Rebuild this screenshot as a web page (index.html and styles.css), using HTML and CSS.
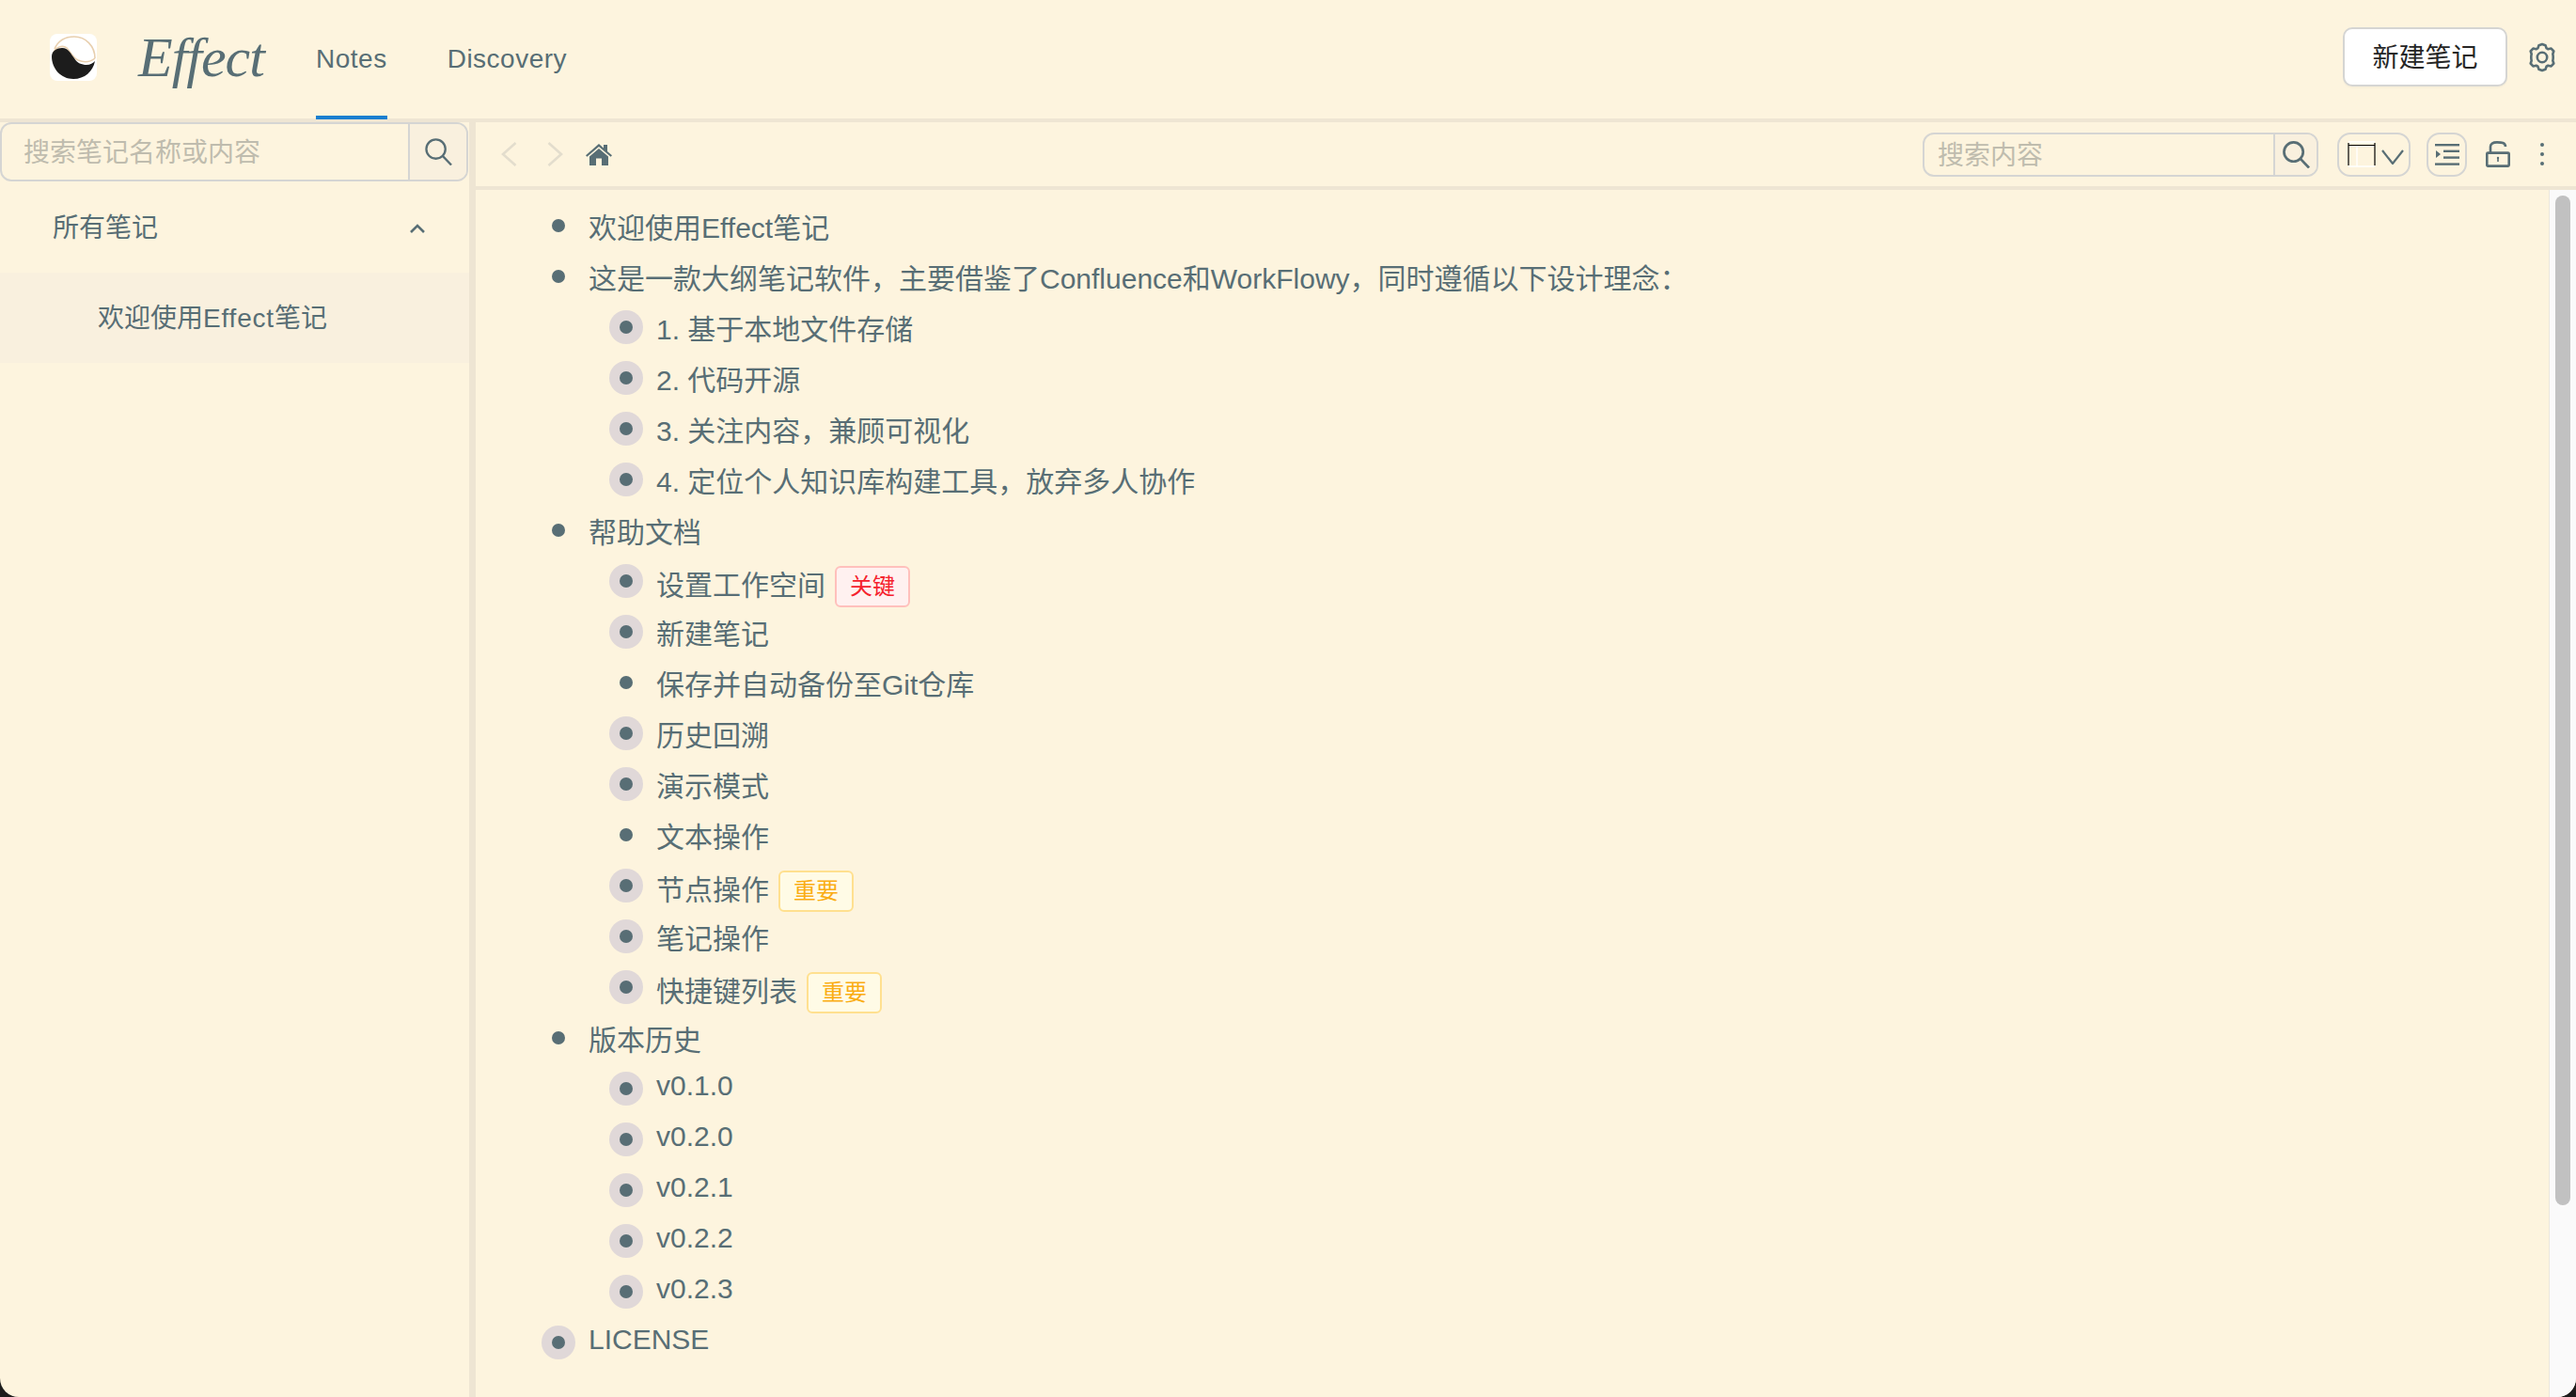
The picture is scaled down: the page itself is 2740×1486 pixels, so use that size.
FILE: index.html
```html
<!DOCTYPE html>
<html lang="zh">
<head>
  <meta charset="UTF-8">
  <title>Effect</title>
  <link rel="stylesheet" href="styles.css">
</head>
<body>

<div class="app">
  <header class="topbar">
    <svg class="logo" viewBox="0 0 50 50">
      <rect width="50" height="50" rx="8" fill="#fff"/>
      <path d="M5 16C9 7 17 3 26 3C38 3 48 13 48 26" fill="none" stroke="#e8cfae" stroke-width="1.6"/>
      <path d="M4 20C7 13 14 12 18 15C22 19 24 25 30 28C37 31 43 30 48 26" fill="none" stroke="#e8cfae" stroke-width="1.6"/>
      <path d="M2 24C2 18 8 15 13 15C20 15 22 21 26 26C29 31 34 33 39 33C43 33 46 31 48 29C46 40 37 48 25 48C12 48 2 37 2 24Z" fill="#1c1c1c"/>
    </svg>
    <div class="brand">Effect</div>
    <nav class="tabs">
      <a class="tab active">Notes</a>
      <a class="tab">Discovery</a>
    </nav>
    <button class="new-note">新建笔记</button>
    <svg class="gear" viewBox="0 0 32 32" fill="none" stroke="#586e75" stroke-width="2.6" stroke-linejoin="round">
      <path d="M16 2L19.5 3.2L20.5 6.2C21.2 6.5 21.8 6.9 22.4 7.3L25.6 6.6L28.3 9.5L27.3 12.5C27.5 13.3 27.7 14.1 27.7 16C27.7 17.9 27.5 18.7 27.3 19.5L28.3 22.5L25.6 25.4L22.4 24.7C21.8 25.1 21.2 25.5 20.5 25.8L19.5 28.8L16 30L12.5 28.8L11.5 25.8C10.8 25.5 10.2 25.1 9.6 24.7L6.4 25.4L3.7 22.5L4.7 19.5C4.5 18.7 4.3 17.9 4.3 16C4.3 14.1 4.5 13.3 4.7 12.5L3.7 9.5L6.4 6.6L9.6 7.3C10.2 6.9 10.8 6.5 11.5 6.2L12.5 3.2Z"/>
      <circle cx="16" cy="16" r="5.2"/>
    </svg>
  </header>

  <div class="workspace">
    <aside class="sidebar">
      <div class="search search-side">
        <div class="search-input">搜索笔记名称或内容</div>
        <div class="search-btn">
          <svg class="search-icon" viewBox="0 0 30 30" fill="none" stroke="#586e75" stroke-width="2.4">
            <circle cx="12" cy="12" r="10.5"/>
            <path d="M19.5 19.5L29 29.5"/>
          </svg>
        </div>
      </div>
      <div class="tree-head">
        <span>所有笔记</span>
        <svg class="caret" viewBox="0 0 18 12" fill="none" stroke="#586e75" stroke-width="2.6">
          <path d="M2 10L9 3L16 10"/>
        </svg>
      </div>
      <div class="tree-item"><span>欢迎使用<span class="latin">Effect</span>笔记</span></div>
    </aside>

    <main class="main">
      <div class="toolbar">
        <svg class="chev" viewBox="0 0 17 26" fill="none" stroke="#e3ddcd" stroke-width="2.6"><path d="M15.5 1L2 13L15.5 25"/></svg>
        <svg class="chev chev-next" viewBox="0 0 17 26" fill="none" stroke="#e3ddcd" stroke-width="2.6"><path d="M1.5 1L15 13L1.5 25"/></svg>
        <svg class="home" viewBox="0 0 28 23" fill="#586e75">
          <path d="M14 0L19 4.4V1H23V7.9L28 12.2L26.6 13.8L14 2.9L1.4 13.8L0 12.2Z"/>
          <path d="M14 5L24 13.6V23H17V15.5H11V23H4V13.6Z"/>
        </svg>
        <div class="toolbar-space"></div>
        <div class="search search-note">
          <div class="search-input">搜索内容</div>
          <div class="search-btn">
            <svg class="search-icon" viewBox="0 0 30 30" fill="none" stroke="#586e75" stroke-width="2.8">
              <circle cx="12" cy="12" r="10.5"/>
              <path d="M19.5 19.5L29 29.5"/>
            </svg>
          </div>
        </div>
        <div class="tool-btn tool-layout">
          <svg class="layout-icon" viewBox="0 0 30 28" fill="none">
            <path d="M1 1H29M1 27H29M10 5V27" stroke="#fff" stroke-width="1.4"/>
            <path d="M1 2V26M29 2V26M1 4.5H29" stroke="#000" stroke-width="1.2"/>
          </svg>
          <svg class="layout-chev" viewBox="0 0 24 16" fill="none" stroke="#586e75" stroke-width="2.2"><path d="M1 1L12 15L23 1"/></svg>
        </div>
        <div class="tool-btn tool-indent">
          <svg class="indent-icon" viewBox="0 0 26 23" fill="#586e75">
            <rect width="26" height="2.4"/>
            <rect x="9" y="6.6" width="17" height="2.4"/>
            <rect x="9" y="13.4" width="17" height="2.4"/>
            <rect y="20.4" width="26" height="2.4"/>
            <path d="M1 7V15L6 11Z"/>
          </svg>
        </div>
        <svg class="lock" viewBox="0 0 26 28" fill="none" stroke="#586e75" stroke-width="2.6">
          <path d="M5 12V6C5 3 7.5 1.4 12 1.4C16.5 1.4 21 1.4 21 6"/>
          <rect x="1.3" y="12.6" width="23.4" height="14" rx="1"/>
          <path d="M13 18V22" stroke-width="1.6"/>
          <circle cx="13" cy="18" r="1.2" fill="#586e75" stroke="none"/>
        </svg>
        <div class="more"><i></i><i></i><i></i></div>
      </div>

      <div class="note-area">
        <div class="note">
          <ul class="outline">
            <li><div class="row"><span class="bullet"></span><span class="txt">欢迎使用Effect笔记</span></div></li>
            <li>
              <div class="row"><span class="bullet"></span><span class="txt">这是一款大纲笔记软件，主要借鉴了Confluence和WorkFlowy，同时遵循以下设计理念：</span></div>
              <ul class="outline">
                <li><div class="row"><span class="bullet fold"></span><span class="txt">1. 基于本地文件存储</span></div></li>
                <li><div class="row"><span class="bullet fold"></span><span class="txt">2. 代码开源</span></div></li>
                <li><div class="row"><span class="bullet fold"></span><span class="txt">3. 关注内容，兼顾可视化</span></div></li>
                <li><div class="row"><span class="bullet fold"></span><span class="txt">4. 定位个人知识库构建工具，放弃多人协作</span></div></li>
              </ul>
            </li>
            <li>
              <div class="row"><span class="bullet"></span><span class="txt">帮助文档</span></div>
              <ul class="outline">
                <li><div class="row"><span class="bullet fold"></span><span class="txt tagged">设置工作空间</span><span class="tag tag-red">关键</span></div></li>
                <li><div class="row"><span class="bullet fold"></span><span class="txt">新建笔记</span></div></li>
                <li><div class="row"><span class="bullet"></span><span class="txt">保存并自动备份至Git仓库</span></div></li>
                <li><div class="row"><span class="bullet fold"></span><span class="txt">历史回溯</span></div></li>
                <li><div class="row"><span class="bullet fold"></span><span class="txt">演示模式</span></div></li>
                <li><div class="row"><span class="bullet"></span><span class="txt">文本操作</span></div></li>
                <li><div class="row"><span class="bullet fold"></span><span class="txt tagged">节点操作</span><span class="tag tag-gold">重要</span></div></li>
                <li><div class="row"><span class="bullet fold"></span><span class="txt">笔记操作</span></div></li>
                <li><div class="row"><span class="bullet fold"></span><span class="txt tagged">快捷键列表</span><span class="tag tag-gold">重要</span></div></li>
              </ul>
            </li>
            <li>
              <div class="row"><span class="bullet"></span><span class="txt">版本历史</span></div>
              <ul class="outline">
                <li><div class="row"><span class="bullet fold"></span><span class="txt ver">v0.1.0</span></div></li>
                <li><div class="row"><span class="bullet fold"></span><span class="txt ver">v0.2.0</span></div></li>
                <li><div class="row"><span class="bullet fold"></span><span class="txt ver">v0.2.1</span></div></li>
                <li><div class="row"><span class="bullet fold"></span><span class="txt ver">v0.2.2</span></div></li>
                <li><div class="row"><span class="bullet fold"></span><span class="txt ver">v0.2.3</span></div></li>
              </ul>
            </li>
            <li><div class="row"><span class="bullet fold"></span><span class="txt ver">LICENSE</span></div></li>
          </ul>
        </div>
        <div class="scrollbar"><div class="thumb"></div></div>
      </div>
    </main>
  </div>
</div>

</body>
</html>
```

FILE: styles.css
```css
* { box-sizing: border-box; }
html, body {
  margin: 0;
  height: 100%;
  background: #1c1c1c;
}
body {
  font-family: "Liberation Sans", "Noto Sans CJK SC", sans-serif;
  font-size: 30px;
  color: #586e75;
  overflow: hidden;
}
.app {
  display: flex;
  flex-direction: column;
  height: 1486px;
  background: #fdf4de;
  border-radius: 0 0 20px 20px;
  overflow: hidden;
}

/* top bar */
.topbar {
  display: flex;
  align-items: center;
  flex: none;
  height: 130px;
  padding: 0 20px 4px 53px;
  border-bottom: 4px solid #eee5d3;
}
.logo {
  width: 50px;
  height: 50px;
  flex: none;
}
.brand {
  width: 233px;
  padding-left: 44px;
  font-family: "Liberation Serif", serif;
  font-style: italic;
  font-size: 60px;
  letter-spacing: -1px;
  flex: none;
}
.tabs {
  display: flex;
  align-self: stretch;
  gap: 64px;
  flex: 1;
}
.tab {
  display: flex;
  align-items: center;
  height: 127px;
  padding-top: 3px;
  font-size: 28px;
  letter-spacing: .5px;
  border-bottom: 4px solid transparent;
}
.tab.active {
  border-bottom-color: #1a7fd0;
}
.new-note {
  width: 175px;
  height: 63px;
  margin-top: -1px;
  padding: 0 0 3px;
  font: inherit;
  font-size: 28px;
  color: #262626;
  background: #fff;
  border: 2px solid #d5d5d3;
  border-radius: 10px;
  box-shadow: 0 2px 0 rgba(0,0,0,0.02);
}
.gear {
  width: 32px;
  height: 32px;
  margin-left: 21px;
}

/* layout */
.workspace {
  display: flex;
  flex: 1;
  min-height: 0;
}
.sidebar {
  width: 506px;
  flex: none;
  border-right: 7px solid #eee5d3;
}
.main {
  display: flex;
  flex-direction: column;
  flex: 1;
  min-width: 0;
}

/* search boxes */
.search {
  display: flex;
  border: 2px solid #d5d5d3;
  border-radius: 12px;
  font-size: 28px;
}
.search-input {
  flex: 1;
  padding-bottom: 3px;
  color: #bfbcae;
  display: flex;
  align-items: center;
}
.search-btn {
  display: flex;
  align-items: center;
  justify-content: center;
  border-left: 2px solid #d5d5d3;
  background: #f9f0de;
  border-radius: 0 10px 10px 0;
}
.search-side {
  width: 498px;
  height: 63px;
}
.search-side .search-input { padding-left: 23px; }
.search-side .search-btn { width: 62px; }
.search-side .search-icon { width: 29px; height: 29px; }
.search-note {
  width: 421px;
  height: 47px;
}
.search-note .search-input { padding-left: 14px; }
.search-note .search-btn { width: 46px; }
.search-note .search-icon { width: 29px; height: 29px; }

/* note tree */
.tree-head {
  display: flex;
  align-items: center;
  justify-content: space-between;
  height: 97px;
  padding: 0 46px 4px 56px;
  font-size: 28px;
}
.caret {
  width: 18px;
  height: 12px;
  margin-top: 6px;
}
.tree-item {
  display: flex;
  align-items: center;
  height: 96px;
  padding: 0 0 4px 104px;
  font-size: 28px;
  background: #f9f0de;
}
.latin {
  letter-spacing: .8px;
}

/* toolbar */
.toolbar {
  display: flex;
  align-items: center;
  flex: none;
  height: 72px;
  padding: 0 34px 0 27px;
  border-bottom: 4px solid #eee5d3;
}
.toolbar-space { flex: 1; }
.chev {
  width: 17px;
  height: 26px;
}
.chev-next { margin-left: 32px; }
.home {
  width: 28px;
  height: 23px;
  margin-left: 24px;
}
.tool-btn {
  display: flex;
  align-items: center;
  height: 47px;
  border: 2px solid #d5d5d3;
  border-radius: 14px;
}
.tool-layout {
  width: 78px;
  margin-left: 20px;
  padding-left: 9px;
}
.layout-icon {
  width: 30px;
  height: 28px;
  flex: none;
}
.layout-chev {
  width: 24px;
  height: 16px;
  margin-left: 6px;
  margin-top: 5px;
  flex: none;
}
.tool-indent {
  justify-content: center;
  width: 43px;
  margin-left: 17px;
}
.indent-icon {
  width: 26px;
  height: 23px;
}
.lock {
  width: 26px;
  height: 28px;
  margin-left: 20px;
}
.more {
  display: flex;
  flex-direction: column;
  gap: 6px;
  margin-left: 32px;
}
.more i {
  display: block;
  width: 4px;
  height: 4px;
  border-radius: 50%;
  background: #586e75;
}

/* outline */
.note-area {
  display: flex;
  flex: 1;
  min-height: 0;
}
.note {
  flex: 1;
  min-width: 0;
  padding: 11px 0 0 70px;
}
.outline {
  list-style: none;
  margin: 0;
  padding: 0;
}
.outline .outline {
  margin-left: 72px;
}
.row {
  display: flex;
  align-items: center;
  height: 54px;
}
.bullet {
  display: flex;
  align-items: center;
  justify-content: center;
  width: 36px;
  height: 36px;
  margin-right: 14px;
  border-radius: 50%;
  flex: none;
}
.bullet::after {
  content: "";
  width: 14px;
  height: 14px;
  border-radius: 50%;
  background: #586e75;
}
.bullet.fold {
  background: #e0d8d8;
}
.txt {
  white-space: nowrap;
}
.txt.ver {
  margin-bottom: 6px;
}
.txt.tagged {
  padding-top: 4px;
}
.tag {
  margin: 12px 0 0 10px;
  padding: 0 14px;
  height: 44px;
  line-height: 40px;
  font-size: 24px;
  border: 2px solid;
  border-radius: 6px;
}
.tag-red {
  color: #f5222d;
  background: #fff1f0;
  border-color: #ffc0bc;
}
.tag-gold {
  color: #faad14;
  background: #fffbe6;
  border-color: #ffe08f;
}

/* scrollbar */
.scrollbar {
  width: 29px;
  flex: none;
  padding: 6px 6px 0 6px;
  background: #fafafa;
  border-left: 1px solid #ebe7dc;
}
.thumb {
  height: 1074px;
  border-radius: 8px;
  background: #c1c1c1;
}
```
